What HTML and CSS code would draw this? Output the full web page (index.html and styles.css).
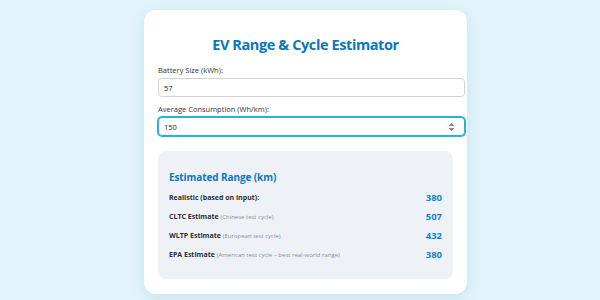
FILE: index.html
```html
<!DOCTYPE html>
<html lang="en">
<head>
    <meta charset="UTF-8">
    <meta name="viewport" content="width=device-width, initial-scale=1.0">
    <title>EV Range &amp; Cycle Estimator</title>
    <link rel="stylesheet" href="styles.css">
</head>
<body>

    <div class="card">
        <h1>EV Range &amp; Cycle Estimator</h1>

        <label for="battery">Battery Size (kWh):</label>
        <input type="number" id="battery" value="57">

        <label for="consumption">Average Consumption (Wh/km):</label>
        <input type="number" id="consumption" class="active" value="150" autofocus>

        <!-- Results -->
        <div class="results">
            <h2>Estimated Range (km)</h2>
            <div class="row">
                <span class="name">Realistic (based on input):</span>
                <span class="value" id="real">380</span>
            </div>
            <div class="row">
                <span class="name">CLTC Estimate <small>(Chinese test cycle)</small></span>
                <span class="value" id="cltc">507</span>
            </div>
            <div class="row">
                <span class="name">WLTP Estimate <small>(European test cycle)</small></span>
                <span class="value" id="wltp">432</span>
            </div>
            <div class="row">
                <span class="name">EPA Estimate <small>(American test cycle – best real-world range)</small></span>
                <span class="value" id="epa">380</span>
            </div>
        </div>
    </div>

</body>
</html>
```

FILE: styles.css
```css
* {
    margin: 0;
    padding: 0;
    box-sizing: border-box;
}

body {
    font-family: "Open Sans", Arial, sans-serif;
    background: #e1f4fb;
    height: 300px;
    overflow: hidden;
}

.card {
    width: 323px;
    margin: 10px 0 0 144px;
    padding: 25px 14px 15px;
    background-color: white;
    border-radius: 12px;
    box-shadow: 0 4px 14px rgba(0, 110, 150, 0.12);
}

h1 {
    font-size: 14.5px;
    line-height: 20px;
    text-align: center;
    color: #0a78bd;
    margin-bottom: 10px;
    letter-spacing: -0.4px;
}

label {
    display: block;
    font-size: 7.5px;
    line-height: 10px;
    color: #333;
    margin-bottom: 3px;
}

input {
    box-sizing: content-box;
    display: block;
    width: 100%;
    height: 17px;
    padding: 0 5px;
    border: 1px solid #cfd3da;
    border-radius: 4px;
    font-family: inherit;
    font-size: 7.5px;
    color: #222;
    margin-bottom: 7px;
}

input.active,
input:focus {
    outline: none;
    border-color: #1fb6d9;
    box-shadow: 0 0 0 1px #1fb6d9;
}

.results {
    margin-top: 15px;
    background-color: #eef2f7;
    border-radius: 8px;
    padding: 19px 11px 15px;
}

.results h2 {
    font-size: 10px;
    line-height: 14px;
    color: #0a78bd;
    margin-bottom: 4px;
    letter-spacing: -0.1px;
}

.row {
    display: flex;
    justify-content: space-between;
    align-items: center;
    height: 19px;
}

.name {
    font-size: 7px;
    font-weight: 700;
    color: #2b2f36;
}

.name small {
    font-size: 6px;
    font-weight: 400;
    color: #8a8f98;
}

.value {
    font-size: 9.5px;
    font-weight: 700;
    color: #1583c9;
}
```
